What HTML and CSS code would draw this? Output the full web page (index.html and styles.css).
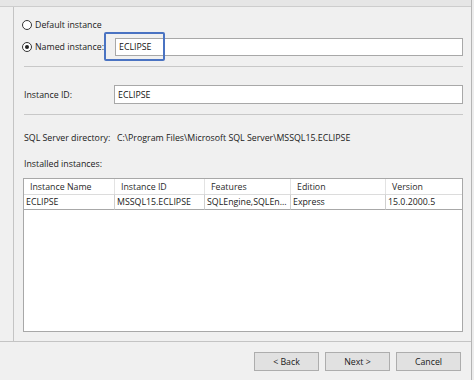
FILE: index.html
```html
<!DOCTYPE html>
<html lang="en">
<head>
  <meta charset="UTF-8" />
  <title>Instance Configuration</title>
  <link rel="stylesheet" href="styles.css">
</head>
<body>
  <div class="window">
    <div class="topbar"></div>

    <div class="main">
      <div class="side"></div>
      <div class="content">
        <label class="radio-row">
          <span class="radio"></span>
          <span class="radio-text">Default instance</span>
        </label>
        <div class="radio-row named">
          <span class="radio checked"></span>
          <span class="radio-text named-label">Named instance:</span>
          <input class="textbox named-box" type="text" value="ECLIPSE">
          <div class="highlight"></div>
        </div>

        <hr class="sep">

        <div class="field-row id-row">
          <span class="field-label">Instance ID:</span>
          <input class="textbox id-box" type="text" value="ECLIPSE">
        </div>

        <hr class="sep">

        <div class="field-row dir-row">
          <span class="field-label">SQL Server directory:</span>
          <span class="dir-value">C:\Program Files\Microsoft SQL Server\MSSQL15.ECLIPSE</span>
        </div>

        <div class="installed-label">Installed instances:</div>

        <div class="grid">
          <table>
            <thead>
              <tr>
                <th class="c1">Instance Name</th>
                <th class="c2">Instance ID</th>
                <th class="c3">Features</th>
                <th class="c4">Edition</th>
                <th class="c5">Version</th>
              </tr>
            </thead>
            <tbody>
              <tr>
                <td>ECLIPSE</td>
                <td>MSSQL15.ECLIPSE</td>
                <td>SQLEngine,SQLEn...</td>
                <td>Express</td>
                <td>15.0.2000.5</td>
              </tr>
            </tbody>
          </table>
        </div>
      </div>
    </div>

    <div class="footer">
      <button class="btn">&lt; Back</button>
      <button class="btn">Next &gt;</button>
      <button class="btn">Cancel</button>
    </div>
  </div>
</body>
</html>
```

FILE: styles.css
```css
html, body {
  margin: 0;
  height: 100%;
}
body {
  font-family: "Open Sans", "Noto Sans", sans-serif;
  font-size: 8.8px;
  line-height: 12px;
  color: #1a1a1a;
  background: #ececec;
}
.window {
  width: 471px;
  height: 380px;
  display: flex;
  flex-direction: column;
  background: #f0f0f0;
  border-right: 1px solid #b4b4b4;
}
.topbar {
  height: 6px;
  background: #e6e6e6;
  border-bottom: 1px solid #cdcdcd;
}
.main {
  height: 334px;
  display: flex;
}
.side {
  width: 13px;
  border-right: 1px solid #c4c4c4;
}
.content {
  flex: 1;
  padding: 12px 8px 0 8px;
  display: flex;
  flex-direction: column;
}
.radio-row {
  display: flex;
  align-items: center;
  height: 12px;
  gap: 3px;
  white-space: nowrap;
}
.radio {
  flex-shrink: 0;
  width: 10px;
  height: 10px;
  box-sizing: border-box;
  border: 1px solid #333;
  border-radius: 50%;
  background: #fff;
  position: relative;
}
.radio.checked::after {
  content: "";
  position: absolute;
  left: 2px;
  top: 2px;
  width: 4px;
  height: 4px;
  border-radius: 50%;
  background: #222;
}
.named {
  position: relative;
  margin-top: 7px;
  height: 18px;
}
.named-label {
  flex-shrink: 0;
  width: 77px;
}
.textbox {
  font: inherit;
  color: #111;
  border: 1px solid #a8a8a8;
  background: #fff;
  padding: 0 3px;
  margin: 0;
  box-sizing: border-box;
  outline: none;
  min-width: 0;
}
.named-box {
  flex: 1;
  height: 18px;
}
.highlight {
  position: absolute;
  left: 82px;
  top: -6px;
  width: 61px;
  height: 29px;
  box-sizing: border-box;
  border: 2px solid #4a73c2;
  border-radius: 2px;
}
.sep {
  border: 0;
  border-top: 1px solid #c8c8c8;
  margin: 10px 0 0 2px;
}
.field-row {
  display: flex;
  align-items: center;
  padding-left: 2px;
  white-space: nowrap;
}
.id-row {
  margin-top: 18px;
}
.field-label {
  flex-shrink: 0;
  width: 90px;
}
.id-box {
  flex: 1;
  height: 19px;
}
.dir-row {
  margin-top: 17px;
}
.dir-value {
  padding-left: 3px;
}
.installed-label {
  margin-top: 14px;
  padding-left: 2px;
}
.grid {
  margin: 8px 0 0 1px;
  height: 154px;
  background: #fff;
  border: 1px solid #a8a8a8;
  box-sizing: border-box;
}
table {
  border-collapse: separate;
  border-spacing: 0;
  table-layout: fixed;
  width: 438px;
}
th, td {
  box-sizing: border-box;
  white-space: nowrap;
  overflow: hidden;
  text-align: left;
  font-weight: normal;
  border-right: 1px solid #e3e3e3;
}
th {
  height: 15px;
  padding: 0 0 0 6px;
  color: #2a2a2a;
}
td {
  height: 16px;
  padding: 0 0 0 2px;
  border-top: 1px solid #dcdcdc;
  border-bottom: 1px solid #a8a8a8;
  border-right-color: #cfcfcf;
}
.c1 { width: 91px; }
.c2 { width: 90px; }
.c3 { width: 86px; }
.c4 { width: 95px; }
.c5 { width: 76px; }
th:last-child, td:last-child {
  border-right: 0;
}
.footer {
  flex: 1;
  border-top: 1px solid #c4c4c4;
  display: flex;
  justify-content: flex-end;
  align-items: flex-start;
  gap: 6px;
  padding: 10px 10px 0 0;
}
.btn {
  font: inherit;
  color: #1a1a1a;
  width: 65px;
  height: 19px;
  padding: 0;
  background: #e1e1e1;
  border: 1px solid #adadad;
}
```
